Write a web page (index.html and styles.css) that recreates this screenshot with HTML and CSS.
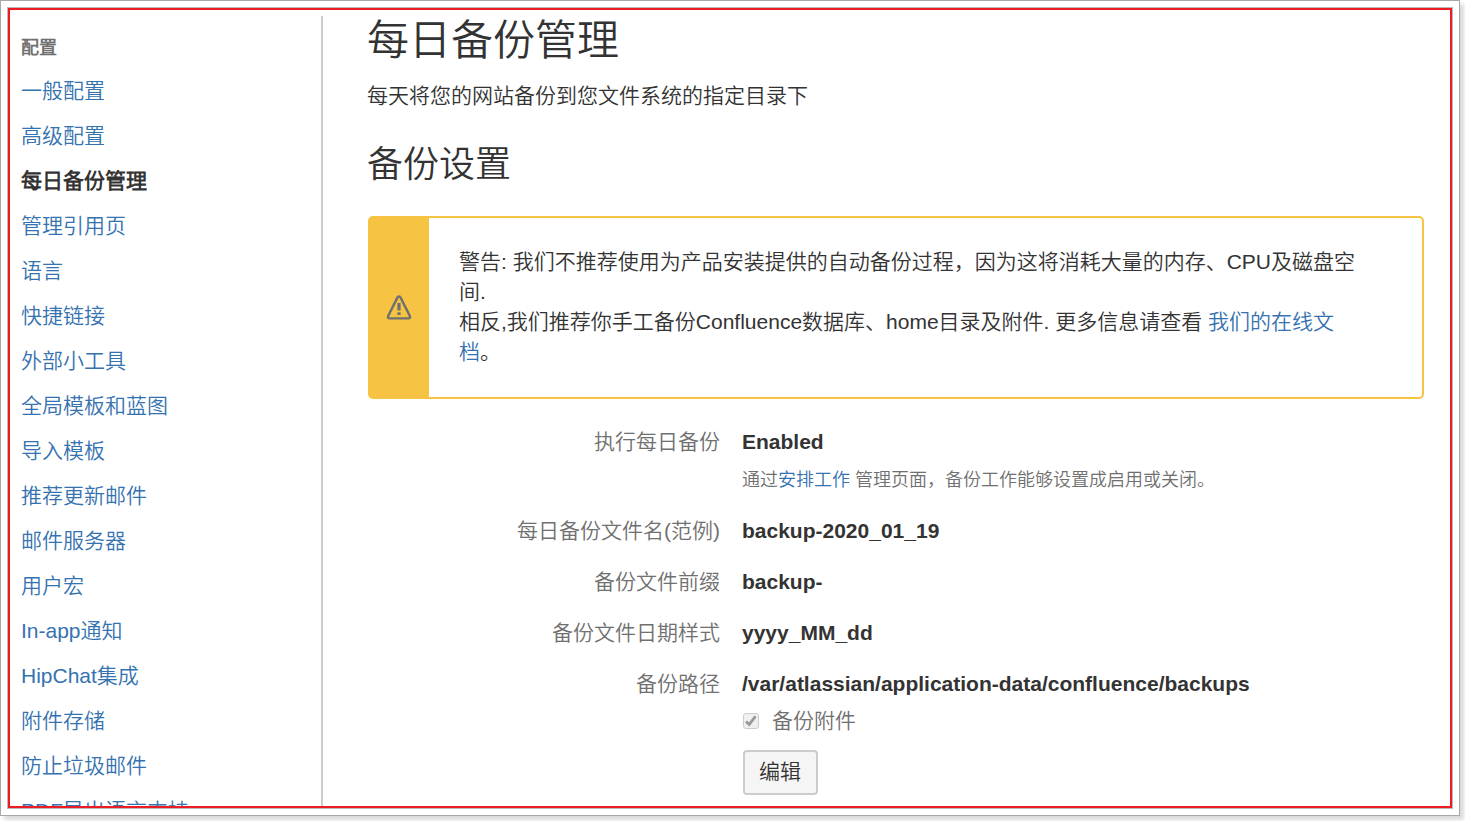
FILE: index.html
```html
<!DOCTYPE html>
<html lang="zh-CN">
<head>
<meta charset="utf-8">
<title>每日备份管理</title>
<link rel="stylesheet" href="styles.css">
</head>
<body>
<div class="window">
  <div class="frame">
    <nav class="sidebar">
      <h3 class="nav-heading">配置</h3>
      <ul class="nav-list">
        <li><a>一般配置</a></li>
        <li><a>高级配置</a></li>
        <li class="current">每日备份管理</li>
        <li><a>管理引用页</a></li>
        <li><a>语言</a></li>
        <li><a>快捷链接</a></li>
        <li><a>外部小工具</a></li>
        <li><a>全局模板和蓝图</a></li>
        <li><a>导入模板</a></li>
        <li><a>推荐更新邮件</a></li>
        <li><a>邮件服务器</a></li>
        <li><a>用户宏</a></li>
        <li><a>In-app通知</a></li>
        <li><a>HipChat集成</a></li>
        <li><a>附件存储</a></li>
        <li><a>防止垃圾邮件</a></li>
        <li><a>PDF导出语言支持</a></li>
      </ul>
    </nav>
    <main class="content">
      <h1>每日备份管理</h1>
      <p class="intro">每天将您的网站备份到您文件系统的指定目录下</p>
      <h2>备份设置</h2>
      <div class="alert">
        <div class="alert-icon">
          <svg width="26" height="26" viewBox="0 0 26 26" fill="none" stroke="#707070">
            <path d="M11.5 2.4 2.1 21.2Q1.5 23.4 3.6 23.4H22.4Q24.5 23.4 23.9 21.2L14.5 2.4Q13 .4 11.5 2.4Z" stroke-width="2.4"/>
            <path d="M13 8V15.4M13 17.2V20" stroke-width="3.2"/>
          </svg>
        </div>
        <p class="alert-text">警告: 我们不推荐使用为产品安装提供的自动备份过程，因为这将消耗大量的内存、CPU及磁盘空<br>间.<br>相反,我们推荐你手工备份Confluence数据库、home目录及附件. 更多信息请查看 <a>我们的在线文<br>档</a>。</p>
      </div>
      <dl class="settings">
        <dt>执行每日备份</dt>
        <dd>Enabled<p class="hint">通过<a>安排工作</a> 管理页面，备份工作能够设置成启用或关闭。</p></dd>
        <dt>每日备份文件名(范例)</dt>
        <dd>backup-2020_01_19</dd>
        <dt>备份文件前缀</dt>
        <dd>backup-</dd>
        <dt>备份文件日期样式</dt>
        <dd>yyyy_MM_dd</dd>
        <dt>备份路径</dt>
        <dd>/var/atlassian/application-data/confluence/backups</dd>
      </dl>
      <div class="actions">
        <div class="check-row">
          <span class="checkbox"><svg width="14" height="14" viewBox="0 0 14 14" fill="none" stroke="#999" stroke-width="2.8"><path d="M2 7.4 5.2 10.4 11.5 2.4"/></svg></span>
          <span>备份附件</span>
        </div>
        <button class="edit">编辑</button>
      </div>
    </main>
  </div>
</div>
</body>
</html>
```
FILE: styles.css
```css
* { box-sizing: border-box; margin: 0; padding: 0; }

body {
  width: 1465px;
  height: 821px;
  overflow: hidden;
  background: #fff;
  color: #333;
  font: 350 21px/30px "Liberation Sans", "Noto Sans CJK SC DemiLight", "Noto Sans CJK SC", sans-serif;
}

a { color: #3572b0; }

.window {
  width: 1460px;
  height: 816px;
  padding: 6px;
  border: 1px solid #a8a8a8;
  box-shadow: 4px 4px 4px rgba(0, 0, 0, .15);
}

.frame {
  display: flex;
  width: 1444px;
  height: 800px;
  padding-top: 6px;
  border: 2px solid #ed1c24;
  outline: 1px solid #bbb;
  margin: 1px;
  overflow: hidden;
}

.sidebar {
  flex: none;
  width: 313px;
  height: 800px;
  padding: 17px 0 0 11px;
  border-right: 2px solid #ccc;
}

.nav-heading {
  color: #707070;
  font-size: 18px;
  font-weight: 700;
  line-height: 30px;
}

.nav-list { padding-top: 5px; list-style: none; }
.nav-list li { height: 45px; line-height: 45px; white-space: nowrap; }
.nav-list .current { font-weight: 700; }

.content { width: 1101px; padding-left: 44px; }

h1 { padding-top: 1px; font-size: 42px; font-weight: 400; line-height: 48px; }
.intro { margin-top: 16px; }
h2 { margin-top: 32px; font-size: 36px; font-weight: 400; line-height: 44px; }

.alert {
  display: flex;
  height: 183px;
  margin: 29px 0 0 1px;
  border: 2px solid #f6c342;
  border-radius: 5px;
}

.alert-icon {
  display: flex;
  flex: none;
  align-items: center;
  justify-content: center;
  width: 59px;
  padding-right: 2px;
  background: #f6c342;
}

.alert-text { padding: 29px 0 0 30px; white-space: nowrap; }

.settings {
  display: grid;
  grid-template-columns: 353px 1fr;
  gap: 21px 22px;
  margin-top: 28px;
}

.settings dt { color: #707070; text-align: right; }
.settings dd { font-weight: 700; }
.hint { padding-top: 8px; color: #707070; font-size: 18px; font-weight: 350; }

.actions { padding: 7px 0 0 376px; }
.check-row { display: flex; align-items: center; gap: 13px; color: #707070; }

.checkbox {
  display: flex;
  align-items: center;
  justify-content: center;
  width: 16px;
  height: 16px;
  border: 1px solid #ccc;
  border-radius: 3px;
  background: #f0f0f0;
}

.edit {
  display: block;
  width: 75px;
  height: 45px;
  margin-top: 14px;
  padding: 0 1px 2px 0;
  border: 2px solid #ccc;
  border-radius: 4px;
  background: #f5f5f5;
  color: #333;
  font: inherit;
}
```
